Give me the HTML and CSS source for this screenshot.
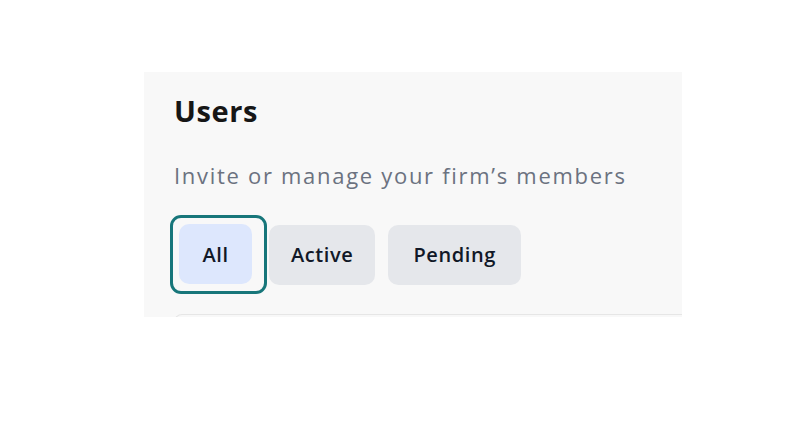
FILE: index.html
```html
<!DOCTYPE html>
<html lang="en">
<head>
<meta charset="utf-8">
<title>Users</title>
<link rel="stylesheet" href="styles.css">
</head>
<body>
<section class="panel">
  <h1 class="title">Users</h1>
  <p class="subtitle">Invite or manage your firm’s members</p>
  <div class="tabs">
    <div class="focus-ring"><button class="tab tab-selected">All</button></div>
    <button class="tab tab-active">Active</button>
    <button class="tab tab-pending">Pending</button>
  </div>
  <div class="card"></div>
</section>
</body>
</html>
```
FILE: styles.css
```css
html, body {
  margin: 0;
  padding: 0;
  background: #ffffff;
}

body {
  font-family: "Open Sans", "Liberation Sans", sans-serif;
}

.panel {
  margin: 72px 0 0 144px;
  width: 538px;
  height: 245px;
  box-sizing: border-box;
  padding: 21px 0 0 30px;
  background: #f8f8f8;
  overflow: hidden;
}

.title {
  margin: 0;
  font-size: 29px;
  line-height: 36px;
  font-weight: 700;
  letter-spacing: 0.6px;
  color: #161616;
}

.subtitle {
  margin: 32px 0 0;
  font-size: 22px;
  line-height: 28px;
  font-weight: 400;
  letter-spacing: 1.7px;
  color: #6b7280;
}

.tabs {
  margin: 26px 0 0 -4px;
  display: flex;
  align-items: center;
  gap: 13px;
}

.focus-ring {
  border: 3px solid #17767a;
  border-radius: 11px;
  padding: 6px 12px 7px 6px;
  margin-right: -11px;
}

.tab {
  height: 60px;
  padding: 0 22px;
  border: none;
  border-radius: 10px;
  background: #e5e7eb;
  font-family: inherit;
  font-size: 20px;
  font-weight: 600;
  letter-spacing: 0.6px;
  color: #111827;
}

.tab-pending {
  padding: 0 25px;
}

.tab-selected {
  display: block;
  width: 73px;
  padding: 0;
  background: #dde7fd;
}

.card {
  margin: 20px 0 0 0;
  height: 60px;
  border: 1px solid #e6e6e6;
  border-right: none;
  border-radius: 8px 0 0 0;
  background: #f8f8f8;
}
```
